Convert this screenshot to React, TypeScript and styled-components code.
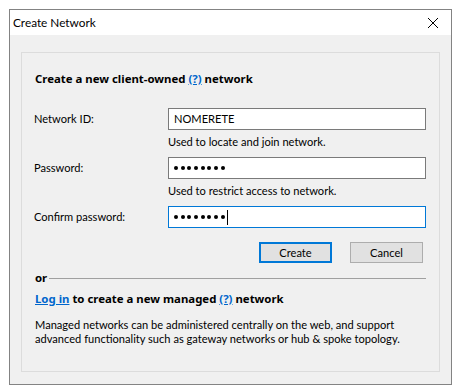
import * as React from 'react';
import styled, { createGlobalStyle } from 'styled-components';

const GlobalStyle = createGlobalStyle`
  *, *::before, *::after {
    box-sizing: border-box;
  }
  html, body {
    margin: 0;
    padding: 0;
    background: #ffffff;
  }
  body {
    font-family: Lato, 'Noto Sans', sans-serif;
    font-size: 11.1px;
    color: #000000;
  }
`;

const Window = styled.div`
  margin: 9px 0 0 9px;
  width: 443px;
  height: 376px;
  border: 1px solid #838383;
  display: flex;
  flex-direction: column;
  background: #f0f0f0;
`;

const TitleBar = styled.div`
  height: 25px;
  flex: none;
  background: #ffffff;
  display: flex;
  align-items: center;
  justify-content: space-between;
  padding: 0 12px 0 3px;
`;

const Title = styled.span`
  font-size: 11.8px;
  line-height: 16px;
`;

const CloseIcon = () => (
  <svg width="12" height="12" viewBox="0 0 12 12">
    <path d="M1 1 L11 11 M11 1 L1 11" stroke="#000" strokeWidth="1" fill="none" />
  </svg>
);

const Body = styled.div`
  flex: 1;
  padding: 17px 11px 12px 11px;
  display: flex;
`;

const Panel = styled.div`
  flex: 1;
  border: 1px solid #dcdcdc;
  padding: 18px 13px 0 12px;
  display: flex;
  flex-direction: column;
`;

const Strong = styled.div<{ $gap?: number }>`
  margin-top: ${({ $gap }) => $gap ?? 0}px;
  font-family: 'Noto Sans', sans-serif;
  font-size: 11.4px;
  font-weight: 700;
  line-height: 16px;
  padding-left: 1px;
`;

const Link = styled.a`
  color: #0066cc;
  text-decoration: underline;
  cursor: pointer;
`;

const Form = styled.div`
  margin-top: 21px;
  display: grid;
  grid-template-columns: 134px 1fr;
  align-items: center;
`;

const Label = styled.label`
  line-height: 16px;
`;

const Field = styled.div<{ $focused?: boolean }>`
  height: 22px;
  border: 1px solid ${({ $focused }) => ($focused ? '#0078d7' : '#7a7a7a')};
  background: #ffffff;
  display: flex;
  align-items: center;
  padding: 0 5px;
  line-height: 16px;
`;

const DotRow = styled.span`
  display: inline-flex;
  align-items: center;
  gap: 2.7px;
`;

const Dot = styled.span`
  width: 4px;
  height: 4px;
  border-radius: 50%;
  background: #000;
`;

const Password = () => (
  <DotRow>
    {Array.from({ length: 8 }, (_, i) => (
      <Dot key={i} />
    ))}
  </DotRow>
);

const Caret = styled.span`
  display: inline-block;
  width: 1px;
  height: 15px;
  background: #000;
  margin-left: 2px;
`;

const Hint = styled.div`
  grid-column: 2;
  line-height: 16px;
  margin: 4px 0 7px 0;
`;

const Buttons = styled.div`
  display: flex;
  justify-content: flex-end;
  gap: 18px;
  margin: 14px 3px 0 0;
`;

const Button = styled.button<{ $default?: boolean }>`
  width: 73px;
  height: 21px;
  font: inherit;
  color: #000;
  background: #e1e1e1;
  border: ${({ $default }) => ($default ? '2px solid #0078d7' : '1px solid #adadad')};
  padding: 0;
`;

const Separator = styled.div`
  display: flex;
  align-items: center;
  gap: 2px;
  margin-top: 7px;
  font-family: 'Noto Sans', sans-serif;
  font-size: 11.4px;
  font-weight: 700;
  line-height: 16px;
  padding-left: 1px;
  &::after {
    content: '';
    flex: 1;
    height: 1px;
    background: #a0a0a0;
  }
`;

const Paragraph = styled.p`
  margin: 11px 0 0 0;
  line-height: 14px;
  padding-left: 1px;
`;

export default function App() {
  return (
    <>
      <GlobalStyle />
      <Window>
        <TitleBar>
          <Title>Create Network</Title>
          <CloseIcon />
        </TitleBar>
        <Body>
          <Panel>
            <Strong>
              Create a new client-owned <Link>(?)</Link> network
            </Strong>
            <Form>
              <Label>Network ID:</Label>
              <Field>NOMERETE</Field>
              <Hint>Used to locate and join network.</Hint>
              <Label>Password:</Label>
              <Field>
                <Password />
              </Field>
              <Hint>Used to restrict access to network.</Hint>
              <Label>Confirm password:</Label>
              <Field $focused>
                <Password />
                <Caret />
              </Field>
            </Form>
            <Buttons>
              <Button $default>Create</Button>
              <Button>Cancel</Button>
            </Buttons>
            <Separator>or</Separator>
            <Strong $gap={5}>
              <Link>Log in</Link> to create a new managed <Link>(?)</Link> network
            </Strong>
            <Paragraph>
              Managed networks can be administered centrally on the web, and support
              <br />
              advanced functionality such as gateway networks or hub &amp; spoke topology.
            </Paragraph>
          </Panel>
        </Body>
      </Window>
    </>
  );
}
